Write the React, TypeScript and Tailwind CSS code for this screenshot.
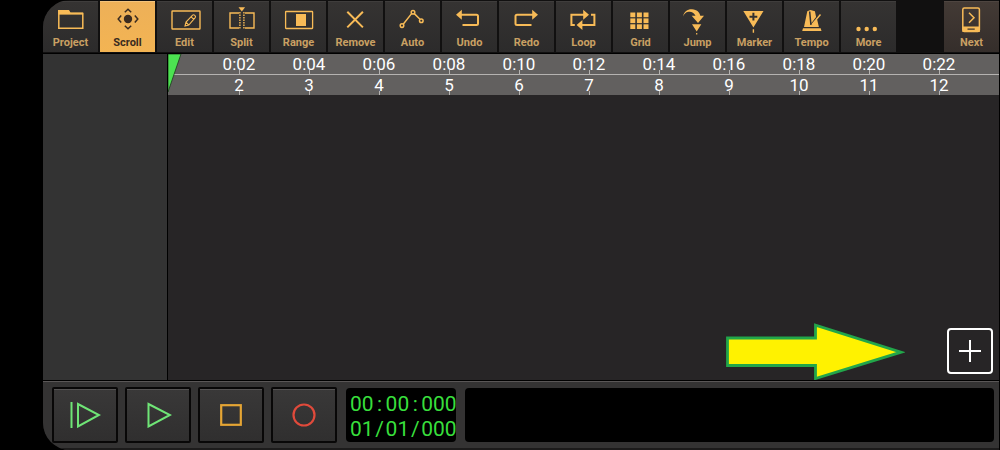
import type { ReactNode } from "react";

type Tool = { label: string; icon: ReactNode };

const line = { fill: "none", stroke: "currentColor" } as const;

const tools: Tool[] = [
  {
    label: "Project",
    icon: (
      <>
        <path d="M15 9h11l1.5 2.5H40v2H15z" fill="currentColor" />
        <path d="M15.8 11v16.3h24V12.5H16" {...line} strokeWidth="1.5" />
      </>
    ),
  },
  {
    label: "Scroll",
    icon: (
      <>
        <circle cx="28" cy="18" r="4.2" fill="currentColor" />
        <path d="M24.8 11.2 28 8.3l3.2 2.9M24.8 24.8l3.2 2.9 3.2-2.9M21.2 14.6 18.2 18l3 3.4M34.8 14.6l3 3.4-3 3.4" {...line} strokeWidth="1.5" />
      </>
    ),
  },
  {
    label: "Edit",
    icon: (
      <>
        <rect x="15" y="10" width="28" height="18" rx="0.5" {...line} strokeWidth="1.4" />
        <path d="M28 25l1-4 6.6-6.8c1.2-1.2 3.8 1 2.6 2.5L31.8 24zM34.2 15.8l2.6 2.6M29 21.2l2.6 2.6" {...line} strokeWidth="1.1" />
      </>
    ),
  },
  {
    label: "Split",
    icon: (
      <>
        <path d="M24.5 6.3h6.6l-3.3 4.2z" fill="currentColor" />
        <path d="M25 12h-9v15h9M31 12h9v15h-9" {...line} strokeWidth="1.4" />
        <path d="M25.9 11v17M29.9 11v17" {...line} strokeWidth="1.4" strokeDasharray="1.6 0.9" />
      </>
    ),
  },
  {
    label: "Range",
    icon: (
      <>
        <rect x="14.6" y="10.5" width="27" height="17" rx="0.5" {...line} strokeWidth="1.3" />
        <rect x="25" y="13" width="10" height="12" fill="currentColor" />
      </>
    ),
  },
  {
    label: "Remove",
    icon: <path d="M19.3 10.8l15.6 15.6M34.9 10.8L19.3 26.4" {...line} strokeWidth="2" />,
  },
  {
    label: "Auto",
    icon: (
      <>
        <path d="M18.2 23.2 26.8 12.4M29.3 12.6l5.7 5.6" {...line} strokeWidth="1.5" />
        <circle cx="17" cy="24.6" r="1.8" {...line} strokeWidth="1.5" />
        <circle cx="28" cy="11.2" r="1.8" {...line} strokeWidth="1.5" />
        <circle cx="36.3" cy="19.7" r="1.8" {...line} strokeWidth="1.5" />
      </>
    ),
  },
  {
    label: "Undo",
    icon: (
      <>
        <path d="M14 13.7l5.8-5v10z" fill="currentColor" />
        <path d="M19 13.7h15.5q1.5 0 1.5 1.5v7.3q0 1.5-1.5 1.5H20.5" {...line} strokeWidth="2" />
      </>
    ),
  },
  {
    label: "Redo",
    icon: (
      <>
        <path d="M39 13.7l-5.8-5v10z" fill="currentColor" />
        <path d="M34 13.7H18q-1.5 0-1.5 1.5v7.3q0 1.5 1.5 1.5h14.5" {...line} strokeWidth="2" />
      </>
    ),
  },
  {
    label: "Loop",
    icon: (
      <>
        <path d="M33 13.7l-5.8-5v10zM20.6 24l5.8-5v10z" fill="currentColor" />
        <path d="M28 13.7H15.4V24h3.4M25 24h13.4V13.7H35" {...line} strokeWidth="2" />
      </>
    ),
  },
  {
    label: "Grid",
    icon: (
      <>
        {[17.3, 23.9, 30.5].flatMap((x) =>
          [11.5, 17.4, 23.3].map((y) => (
            <rect key={`${x}-${y}`} x={x} y={y} width="5" height="4.7" fill="currentColor" />
          ))
        )}
      </>
    ),
  },
  {
    label: "Jump",
    icon: (
      <path
        d="M13 15.5C14 10.5 18 8 22 8.3c5 .4 7.5 3 8.3 6.5h3.7L28 22l-6.3-7.2h3.8C24 11.3 21 10.3 18.5 10.8c-3 .5-4.5 2.3-5.5 4.7zM22 23.2h9.3l-4.6 7.3zM26.1 32h1.2v1.6h-1.2z"
        fill="currentColor"
      />
    ),
  },
  {
    label: "Marker",
    icon: (
      <path
        fillRule="evenodd"
        d="M16.3 10h20.2l-10.1 16.5zM25.4 11.8v2.9h-2.9v2h2.9v2.9h2v-2.9h2.9v-2h-2.9v-2.9zM25.7 28.2h1.4v3.5h-1.4z"
        fill="currentColor"
      />
    ),
  },
  {
    label: "Tempo",
    icon: (
      <>
        <path d="M23.3 10.3 26.5 9l4.4 1.3 1.2 5.7-4.6 6-1.1-11.5h-1.5l1.3 13.5h1.7l5-6.4 2 8.4H20z" fill="currentColor" />
        <path d="M36.5 13.5l-8.7 10.3" {...line} strokeWidth="1.4" />
        <path d="M19 27.2h17.7l.8 2.8H18.2z" fill="currentColor" />
      </>
    ),
  },
  {
    label: "More",
    icon: (
      <>
        <circle cx="17.5" cy="28" r="2.2" fill="currentColor" />
        <circle cx="25.7" cy="28" r="2.2" fill="currentColor" />
        <circle cx="33.8" cy="28" r="2.2" fill="currentColor" />
      </>
    ),
  },
];

const nextTool: Tool = {
  label: "Next",
  icon: (
    <>
      <rect x="18.8" y="7" width="16.6" height="23.5" rx="1.5" {...line} strokeWidth="1.5" />
      <path fillRule="evenodd" d="M18.5 25.5h17.2V31H18.5zM23.5 27.6v1.2h7.2v-1.2z" fill="currentColor" />
      <path d="M25 11.7l5 5-5 5" {...line} strokeWidth="1.5" />
    </>
  ),
};

const marks = Array.from({ length: 11 }, (_, i) => ({
  time: `0:${String((i + 1) * 2).padStart(2, "0")}`,
  bar: i + 2,
}));

const idleTool = "bg-linear-to-b from-[#353332] to-[#2c2b2b] text-[#f8bb57] border-[#3f3d3c]";
const activeTool = "bg-linear-to-b from-[#edb058] to-[#f3b453] text-[#3a2b20] border-[#f3c37c]";
const pageTool = "ml-auto bg-linear-to-b from-[#433a35] to-[#352e2b] text-[#f8bb57] border-[#4e4540]";

function ToolButton({ tool, look, labelColor }: { tool: Tool; look: string; labelColor: string }) {
  return (
    <button type="button" className={`flex h-[51px] w-[55px] shrink-0 flex-col items-center overflow-hidden border-t ${look}`}>
      <svg viewBox="0 1 55 34" className="h-[34px] w-[55px] shrink-0" aria-hidden="true">
        {tool.icon}
      </svg>
      <span className={`text-[11px] leading-[14px] font-bold ${labelColor}`}>{tool.label}</span>
    </button>
  );
}

function RulerRow({ values }: { values: (string | number)[] }) {
  return (
    <div className="flex h-5 overflow-hidden pl-9">
      {values.map((v) => (
        <div key={v} className="relative w-[70px] shrink-0 text-center text-[17px] leading-5 text-white">
          {v}
          <span className="absolute bottom-0 left-[35px] h-1 w-px bg-[#b5b3b1]" />
        </div>
      ))}
    </div>
  );
}

function TransportButton({ label, children }: { label: string; children: ReactNode }) {
  return (
    <button
      type="button"
      aria-label={label}
      className="flex h-14 w-[66px] shrink-0 items-center justify-center rounded-xs border-2 border-[#080707] bg-linear-to-b from-[#393838] to-[#302f2f] shadow-[inset_0_1px_0_#555353]"
    >
      {children}
    </button>
  );
}

function Readout({ parts, separator }: { parts: string[]; separator: string }) {
  return (
    <div className="flex whitespace-nowrap">
      {parts.map((part, i) => (
        <span key={i} className="flex">
          {i > 0 && <span className="w-3 text-center">{separator}</span>}
          <span>{part}</span>
        </span>
      ))}
    </div>
  );
}

export default function App() {
  return (
    <div className="flex h-screen min-h-[300px] bg-black pr-px pl-[43px] font-[Roboto,sans-serif]">
      <div className="flex min-w-0 flex-1 flex-col overflow-hidden rounded-l-[27px] bg-[#111010]">
        <header className="flex h-[54px] shrink-0 gap-0.5 overflow-hidden border-b border-black pt-px">
          {tools.map((tool) => (
            <ToolButton
              key={tool.label}
              tool={tool}
              look={tool.label === "Scroll" ? activeTool : idleTool}
              labelColor={tool.label === "Scroll" ? "text-[#3a2b20]" : "text-[#c9a063]"}
            />
          ))}
          <ToolButton tool={nextTool} look={pageTool} labelColor="text-[#c9a063]" />
        </header>

        <main className="flex min-h-0 flex-1">
          <aside className="w-[125px] shrink-0 border-r border-black bg-[#333333]" />
          <section className="relative flex min-w-0 flex-1 flex-col bg-[#272526]">
            <div className="shrink-0 bg-[#62605f]">
              <RulerRow values={marks.map((m) => m.time)} />
              <div className="h-px bg-[#b5b3b1]" />
              <RulerRow values={marks.map((m) => m.bar)} />
            </div>
            <svg viewBox="0 0 14 40" className="absolute top-0 left-0 h-10 w-3.5" aria-hidden="true">
              <path d="M0 0H13L0 38z" fill="#4ce351" stroke="#1d3a1d" strokeWidth="0.8" />
            </svg>
            <svg viewBox="0 0 180 58" className="absolute right-[94px] bottom-0 h-[58px] w-[180px]" aria-hidden="true">
              <path d="M2.5 16H90.5V3.2L176 30.2 90.5 56.5V43.5H2.5z" fill="#fff200" stroke="#22a64a" strokeWidth="2.8" />
            </svg>
            <button
              type="button"
              aria-label="Add track"
              className="absolute right-1.5 bottom-1.5 flex size-[46px] items-center justify-center rounded-sm border-2 border-white"
            >
              <svg viewBox="0 0 22 22" className="size-[22px]" aria-hidden="true">
                <path d="M11 0v22M0 11h22" stroke="#fff" strokeWidth="2" />
              </svg>
            </button>
          </section>
        </main>

        <footer className="flex h-[70px] shrink-0 border-t border-black bg-[#343333] pl-[9px] shadow-[inset_0_1px_0_#5a5757,inset_0_-2px_0_#1c1b1b]">
          <div className="flex min-w-0 flex-1 items-start gap-[7px] pt-1.5 pr-[5px]">
            <TransportButton label="Play from start">
              <svg viewBox="0 0 32 26" className="h-[26px] w-8" aria-hidden="true">
                <path d="M2.5 0v26M9 2v22.500L30 13z" fill="none" stroke="#6fe576" strokeWidth="2" />
              </svg>
            </TransportButton>
            <TransportButton label="Play">
              <svg viewBox="0 0 28 26" className="h-[26px] w-7" aria-hidden="true">
                <path d="M4.500 2v22.500L26 13z" fill="none" stroke="#6fe576" strokeWidth="2" />
              </svg>
            </TransportButton>
            <TransportButton label="Stop">
              <svg viewBox="0 0 22 22" className="size-[22px]" aria-hidden="true">
                <rect x="1.200" y="1.200" width="19.600" height="19.600" fill="none" stroke="#e5a534" strokeWidth="2.200" />
              </svg>
            </TransportButton>
            <TransportButton label="Record">
              <svg viewBox="0 0 24 24" className="size-6" aria-hidden="true">
                <circle cx="12" cy="12" r="10.500" fill="none" stroke="#e04a3b" strokeWidth="2.200" />
              </svg>
            </TransportButton>
            <div className="mt-px ml-0.5 h-[54px] w-[110px] shrink-0 overflow-hidden rounded-sm bg-black pt-1 pl-1 text-[21px] leading-[25px] text-[#38df3c]">
              <Readout parts={["00", "00", "000"]} separator=":" />
              <Readout parts={["01", "01", "000"]} separator="/" />
            </div>
            <div className="mt-px ml-0.5 h-[54px] min-w-0 flex-1 rounded-sm bg-black" />
          </div>
        </footer>
      </div>
    </div>
  );
}
